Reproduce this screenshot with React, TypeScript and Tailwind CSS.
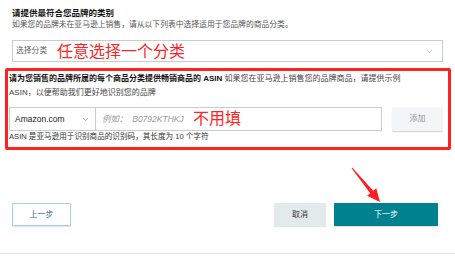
import { ChevronDown } from 'lucide-react'

const font = { fontFamily: '"Liberation Sans", "Noto Sans CJK SC", sans-serif' }

export default function App() {
  return (
    <main className="relative h-[256px] w-[455px] overflow-hidden bg-white text-[#111]" style={font}>
      <div className="flex flex-col px-[12px] pt-[8px]">
        {/* Category */}
        <h2 className="text-[8.5px] font-bold leading-[11px]">请提供最符合您品牌的类别</h2>
        <p className="text-[7.8px] leading-[11px] text-[#555]">
          如果您的品牌未在亚马逊上销售，请从以下列表中选择适用于您品牌的商品分类。
        </p>
        <div className="relative mt-[10px] flex h-[22px] w-[431px] items-center justify-between border border-[#c6cdd1] pl-[3px] pr-[8px]">
          <span className="text-[7.8px] text-[#666]">选择分类</span>
          <ChevronDown size={9} strokeWidth={1.5} className="text-[#8a9aa0]" />
          <span className="absolute left-[44px] top-[1px] text-[16px] leading-[19px] text-[#ff2424]">
            任意选择一个分类
          </span>
        </div>

        {/* ASIN (red frame) */}
        <div className="relative -ml-[7px] mt-[6px] w-[446px] rounded-[2px] border-[3px] border-[#ff2020] pb-[5px] pl-[1px] pr-[5px] pt-[1px]">
          <p className="text-[8px] leading-[14px]">
            <span className="font-bold">请为您销售的品牌所属的每个商品分类提供畅销商品的 ASIN</span>{' '}
            <span className="text-[#444]">如果您在亚马逊上销售您的品牌商品，请提供示例</span>
            <br />
            <span className="text-[#444]">ASIN，以便帮助我们更好地识别您的品牌</span>
          </p>
          <div className="mt-[7px] flex h-[24px] items-stretch">
            <div className="flex w-[87px] items-center justify-between border border-[#c6cdd1] pl-[5px] pr-[5px]">
              <span className="text-[8.5px] text-[#222]">Amazon.com</span>
              <ChevronDown size={9} strokeWidth={1.5} className="text-[#666]" />
            </div>
            <div className="relative flex w-[286px] items-center border border-l-0 border-[#c6cdd1] pl-[6px]">
              <span className="text-[8.5px] italic text-[#999]">例如：&nbsp;&nbsp;B0792KTHKJ</span>
              <span className="absolute left-[97px] top-[2px] text-[16px] leading-[18px] text-[#ff2424]">不用填</span>
            </div>
            <button className="ml-auto flex w-[51px] items-center justify-center rounded-[2px] bg-[#f3f5f6] text-[8px] text-[#8f979a] shadow-[0_1px_1px_rgba(0,0,0,0.18)]">
              添加
            </button>
          </div>
          <p className="text-[7.6px] leading-[11px] text-[#333]">
            ASIN 是亚马逊用于识别商品的识别码，其长度为 10 个字符
          </p>
        </div>

        {/* Actions */}
        <div className="mt-[53px] flex h-[23px] items-stretch">
          <button className="w-[59px] rounded-[1px] border border-[#a3d5d1] text-[8px] text-[#2c6b78] shadow-[0_1px_1px_rgba(0,0,0,0.12)]">
            上一步
          </button>
          <button className="ml-auto w-[52px] rounded-[1px] bg-[#e3eaec] text-[8px] text-[#333] shadow-[0_1px_1px_rgba(0,0,0,0.12)]">
            取消
          </button>
          <button className="ml-[8px] mr-[5px] w-[104px] rounded-[1px] bg-[#00818f] text-[8px] text-white shadow-[0_1px_1px_rgba(0,0,0,0.15)]">
            下一步
          </button>
        </div>
      </div>
      <div className="absolute bottom-[2px] left-0 h-px w-full bg-[#e6e6e6]" />

      {/* annotation arrow */}
      <svg className="pointer-events-none absolute left-0 top-0" width="455" height="256" viewBox="0 0 455 256">
        <polygon
          fill="#ff1f1f"
          points="351.6,168.3 352.4,167.7 373.2,190.7 376.3,188.2 380,202 367.1,195.8 370.2,193.3"
        />
      </svg>
    </main>
  )
}
